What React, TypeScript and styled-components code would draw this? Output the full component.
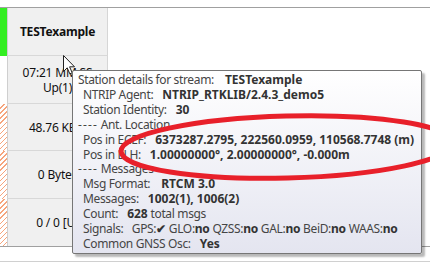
import React from "react";
import styled, { createGlobalStyle } from "styled-components";

const Global = createGlobalStyle`
  html, body { margin: 0; padding: 0; background: #fff; }
  body {
    width: 430px; height: 275px; overflow: hidden;
    font-family: "Noto Sans", "Open Sans", sans-serif;
  }
`;

const Page = styled.div`
  position: relative;
  width: 430px;
  height: 275px;
  overflow: hidden;
  background: #fff;
`;

const TopStrip = styled.div`
  height: 7px;
  border-bottom: 1px solid #a0a0a0;
`;

const Table = styled.div`
  display: flex;
  flex-direction: column;
  border-bottom: 1px solid #a0a0a0;
`;

const Row = styled.div<{ $h: number }>`
  display: flex;
  height: ${(p) => p.$h}px;
`;

const Status = styled.div<{ $kind: "ok" | "blank" | "hatch" }>`
  width: 7px;
  flex: none;
  background: ${(p) =>
    p.$kind === "ok"
      ? "#33ee22"
      : p.$kind === "hatch"
      ? "repeating-linear-gradient(135deg, #fff 0 2.6px, #f6a47c 2.6px 3.6px)"
      : "#fff"};
`;

const Cell = styled.div<{ $header?: boolean; $last?: boolean }>`
  box-sizing: border-box;
  width: 101px;
  flex: none;
  border-left: 1px solid #cfcfcf;
  border-right: 1px solid #d6d6d6;
  border-bottom: ${(p) => (p.$last ? "none" : "1px solid #d8d8d8")};
  background: #f0f0f0;
  display: flex;
  flex-direction: column;
  align-items: center;
  justify-content: center;
  font-size: 12px;
  line-height: 15px;
  letter-spacing: -0.2px;
  color: #111;
  font-weight: ${(p) => (p.$header ? 700 : 400)};
  white-space: nowrap;
`;

const Footer = styled.div`
  margin-top: 14px;
  border-top: 1px solid #d0d0d0;
  height: 20px;
`;

const Cursor = styled.svg`
  position: absolute;
  left: 62px;
  top: 54px;
`;

const Tip = styled.div`
  position: absolute;
  left: 72px;
  top: 70px;
  width: 350px;
  box-sizing: border-box;
  padding: 2px 0 1px 5px;
  border: 1px solid #767676;
  border-radius: 2px;
  background: linear-gradient(to bottom, #ffffff 0%, #e4e5f0 100%);
  box-shadow: 3px 3px 2px rgba(0, 0, 0, 0.28);
  font-size: 12px;
  line-height: 14.9px;
  letter-spacing: -0.35px;
  color: #454545;
  white-space: nowrap;
`;

const Line = styled.div<{ $indent?: boolean }>`
  padding-left: ${(p) => (p.$indent ? 5 : 0)}px;
`;

const Dashes = styled.span`
  letter-spacing: 1.1px;
`;

const Val = styled.b<{ $gap?: number }>`
  font-weight: 700;
  letter-spacing: 0;
  color: #333;
  margin-left: ${(p) => p.$gap ?? 9}px;
`;

const Bold = styled.b`
  font-weight: 700;
  letter-spacing: -0.2px;
  color: #333;
`;

const Annotation = styled.svg`
  position: absolute;
  left: 0;
  top: 0;
  pointer-events: none;
`;

export default function App() {
  return (
    <Page>
      <Global />
      <TopStrip />
      <Table>
        <Row $h={48}>
          <Status $kind="ok" />
          <Cell $header>TESTexample</Cell>
        </Row>
        <Row $h={48}>
          <Status $kind="blank" />
          <Cell>
            <span>07:21 MM:SS</span>
            <span>Up(1)</span>
          </Cell>
        </Row>
        <Row $h={47}>
          <Status $kind="hatch" />
          <Cell>48.76 KB/s</Cell>
        </Row>
        <Row $h={48}>
          <Status $kind="hatch" />
          <Cell>0 Bytes</Cell>
        </Row>
        <Row $h={47}>
          <Status $kind="hatch" />
          <Cell $last>0 / 0 [U]</Cell>
        </Row>
      </Table>
      <Footer />

      <Cursor width="14" height="22" viewBox="0 0 14 22">
        <path
          d="M1.5 1.5 L1.5 17.5 L5.2 13.8 L7.8 19.8 L10.2 18.8 L7.6 12.8 L12.5 12.8 Z"
          fill="#fff"
          stroke="#222"
          strokeWidth="1"
          strokeLinejoin="miter"
        />
      </Cursor>

      <Tip>
        <Line>
          Station details for stream:<Val $gap={11}>TESTexample</Val>
        </Line>
        <Line $indent>
          NTRIP Agent:<Val>NTRIP_RTKLIB/2.4.3_demo5</Val>
        </Line>
        <Line $indent>
          Station Identity:<Val>30</Val>
        </Line>
        <Line>
          <Dashes>----</Dashes> Ant. Location
        </Line>
        <Line $indent>
          Pos in ECEF:<Val>6373287.2795, 222560.0959, 110568.7748 (m)</Val>
        </Line>
        <Line $indent>
          Pos in LLH:<Val>1.00000000°, 2.00000000°, -0.000m</Val>
        </Line>
        <Line>
          <Dashes>----</Dashes> Messages
        </Line>
        <Line $indent>
          Msg Format:<Val $gap={11}>RTCM 3.0</Val>
        </Line>
        <Line $indent>
          Messages:<Val>1002(1), 1006(2)</Val>
        </Line>
        <Line $indent>
          Count:<Val>628</Val> total msgs
        </Line>
        <Line $indent>
          Signals:&nbsp;&nbsp; GPS:<Bold>✔</Bold> GLO:<Bold>no</Bold> QZSS:<Bold>no</Bold> GAL:<Bold>no</Bold> BeiD:<Bold>no</Bold> WAAS:<Bold>no</Bold>
        </Line>
        <Line $indent>
          Common GNSS Osc:<Val>Yes</Val>
        </Line>
      </Tip>

      <Annotation width="430" height="275" viewBox="0 0 430 275">
        <ellipse
          cx="287"
          cy="147"
          rx="166"
          ry="31"
          transform="rotate(-1.5 287 147)"
          fill="none"
          stroke="#e8202a"
          strokeWidth="5"
        />
      </Annotation>
    </Page>
  );
}
